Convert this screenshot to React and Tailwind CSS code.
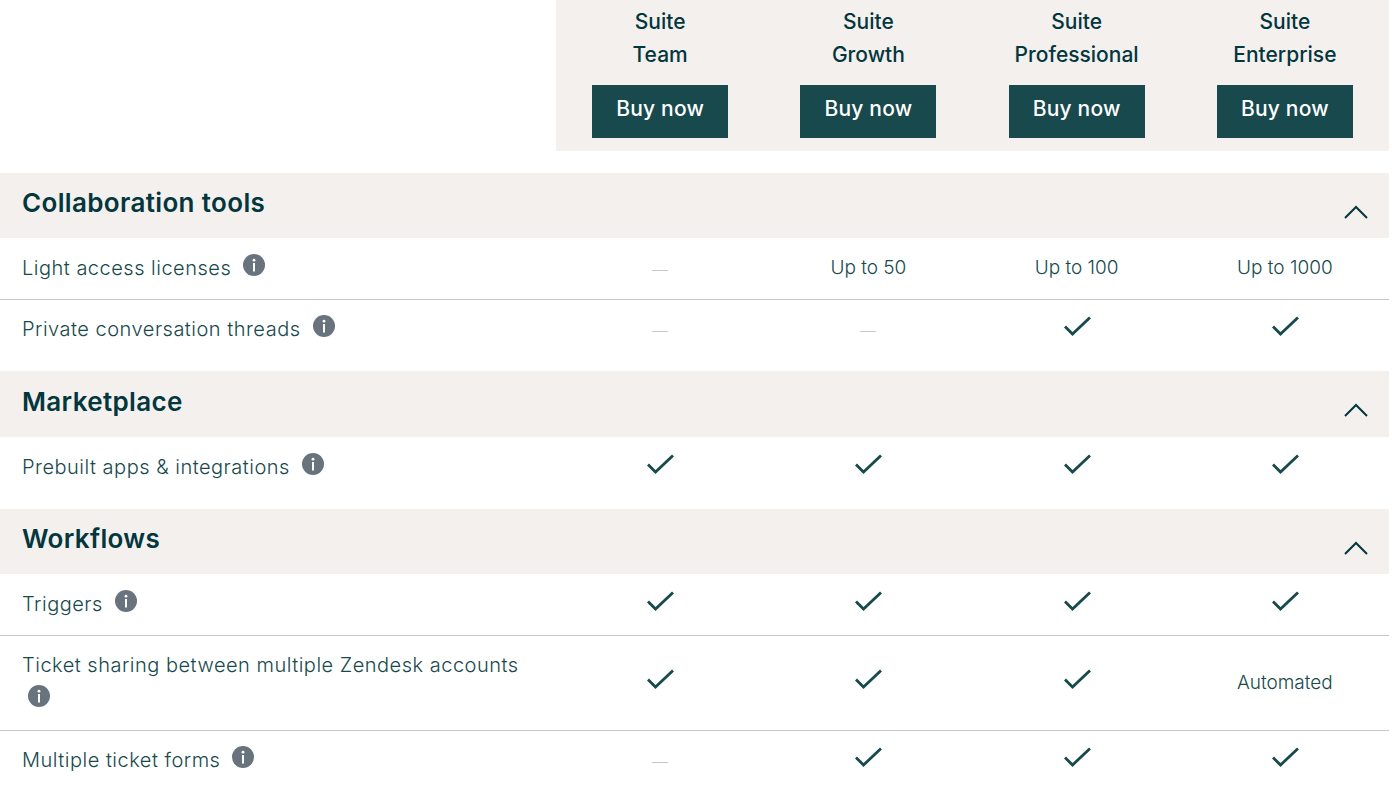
const body = '"Inter", "Lato", sans-serif';

function Info() {
  return (
    <svg width="22" height="22" viewBox="0 0 22 22" className="shrink-0 block">
      <circle cx="11" cy="11" r="11" fill="#68737d" />
      <circle cx="11" cy="6.2" r="1.4" fill="#fff" />
      <rect x="10" y="9" width="2" height="8.5" fill="#fff" />
    </svg>
  );
}

function Check() {
  return (
    <svg width="27" height="20" viewBox="0 0 27 20" className="block">
      <path d="M1 10.5 L8.5 18 L26 1.5" fill="none" stroke="#17494d" strokeWidth="2.8" />
    </svg>
  );
}

function Dash() {
  return <div className="w-4 h-px bg-[#c2c8cc] mt-1" />;
}

function Cell({ v }) {
  let inner;
  if (v === true) inner = <div className="-mt-2 ml-px"><Check /></div>;
  else if (v === false) inner = <Dash />;
  else inner = <span className="text-[19px] font-light text-[#17494d]">{v}</span>;
  return <div className="flex items-center justify-center">{inner}</div>;
}

function Chevron() {
  return (
    <svg width="24" height="14" viewBox="0 0 24 14" className="absolute right-[21px] top-[32px]">
      <path d="M1 13 L12 2 L23 13" fill="none" stroke="#03363d" strokeWidth="2" />
    </svg>
  );
}

function Section({ title, h }) {
  return (
    <div className={`relative bg-[#f3f0ee] flex items-center pl-[22px] ${h}`}>
      <h2 className="text-[26px] font-semibold text-[#03363d] tracking-[0.35px]">{title}</h2>
      <Chevron />
    </div>
  );
}

function Row({ label, cells, h, border, wrapInfo }) {
  return (
    <div className={`grid grid-cols-[556px_1fr_1fr_1fr_1fr] ${h} ${border ? "border-b border-[#c2c8cc]" : ""}`}>
      <div className={`pl-[22px] text-[20px] font-light text-[#17494d] tracking-[0.5px] ${wrapInfo ? "pt-[15px]" : "flex items-center gap-3"}`}>
        {wrapInfo ? (
          <>
            <div className="leading-[28px]">{label}</div>
            <div className="pl-[6px] pt-[6px]"><Info /></div>
          </>
        ) : (
          <>
            <span className="-mt-[2px]">{label}</span>
            <span className="-mt-[7px] flex"><Info /></span>
          </>
        )}
      </div>
      {cells.map((c, i) => <Cell key={i} v={c} />)}
    </div>
  );
}

function Plan({ name }) {
  return (
    <div className="flex flex-col items-center">
      <div className="text-[21px] leading-[33px] font-medium text-[#03363d] text-center pt-[5px]">
        Suite<br />{name}
      </div>
      <button className="mt-[14px] w-[136px] h-[53px] bg-[#17494d] text-white text-[21px] font-medium pb-[5px] tracking-[0.2px]">Buy now</button>
    </div>
  );
}

export default function App() {
  return (
    <div className="w-[1389px] h-[786px] overflow-hidden bg-white" style={{ fontFamily: body }}>
      <div className="flex justify-end h-[173px]">
        <div className="w-[833px] h-[151px] bg-[#f3f0ee] grid grid-cols-4">
          <Plan name="Team" />
          <Plan name="Growth" />
          <Plan name="Professional" />
          <Plan name="Enterprise" />
        </div>
      </div>
      <Section title="Collaboration tools" h="h-[65px] pb-[7px]" />
      <Row label="Light access licenses" cells={[false, "Up to 50", "Up to 100", "Up to 1000"]} h="h-[62px]" border />
      <Row label="Private conversation threads" cells={[false, false, true, true]} h="h-[71px] pb-[12px]" />
      <Section title="Marketplace" h="h-[66px] pb-[5px]" />
      <Row label="Prebuilt apps & integrations" cells={[true, true, true, true]} h="h-[72px] pb-[11px]" />
      <Section title="Workflows" h="h-[65px] pb-[7px]" />
      <Row label="Triggers" cells={[true, true, true, true]} h="h-[62px]" border />
      <Row label="Ticket sharing between multiple Zendesk accounts" cells={[true, true, true, "Automated"]} h="h-[95px]" border wrapInfo />
      <Row label="Multiple ticket forms" cells={[false, true, true, true]} h="h-[59px]" />
    </div>
  );
}
